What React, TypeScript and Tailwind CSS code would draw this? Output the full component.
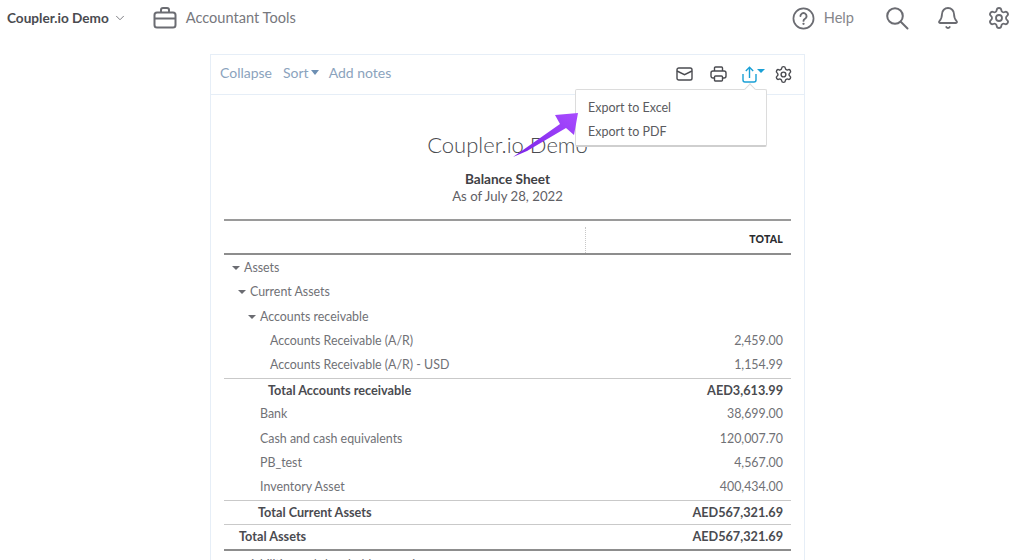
import React from "react";
import { ChevronDown, Settings, Bell } from "lucide-react";

const font = "[font-family:Lato,'Liberation_Sans',sans-serif]";

function Caret({ className }: { className: string }) {
  return <span className={`inline-block w-0 h-0 border-l-[4px] border-r-[4px] border-t-[4px] border-l-transparent border-r-transparent ${className}`} />;
}

type RowProps = {
  label: string;
  value?: string;
  indent: string;
  bold?: boolean;
  caret?: boolean;
  line?: boolean;
};

const rows: RowProps[] = [
  { label: "Assets", indent: "pl-[20px]", caret: true },
  { label: "Current Assets", indent: "pl-[26px]", caret: true },
  { label: "Accounts receivable", indent: "pl-[36px]", caret: true },
  { label: "Accounts Receivable (A/R)", value: "2,459.00", indent: "pl-[46px]" },
  { label: "Accounts Receivable (A/R) - USD", value: "1,154.99", indent: "pl-[46px]" },
  { label: "Total Accounts receivable", value: "AED3,613.99", indent: "pl-[44px]", bold: true, line: true },
  { label: "Bank", value: "38,699.00", indent: "pl-[36px]" },
  { label: "Cash and cash equivalents", value: "120,007.70", indent: "pl-[36px]" },
  { label: "PB_test", value: "4,567.00", indent: "pl-[36px]" },
  { label: "Inventory Asset", value: "400,434.00", indent: "pl-[36px]" },
  { label: "Total Current Assets", value: "AED567,321.69", indent: "pl-[34px]", bold: true, line: true },
  { label: "Total Assets", value: "AED567,321.69", indent: "pl-[15px]", bold: true, line: true },
];

function Row({ label, value, indent, bold, caret, line }: RowProps) {
  return (
    <div className={`flex items-center justify-between h-[24.4px] pr-[8px] ${indent} ${line ? "border-t border-[#c9c9c9]" : ""} ${bold ? "text-[12.7px] font-bold text-[#4a4b50]" : "text-[12.4px] text-[#707176]"}`}>
      <span className="relative">
        {caret && <Caret className="absolute left-[-12px] top-[7px] border-t-[#6b6c72]" />}
        {label}
      </span>
      {value && <span>{value}</span>}
    </div>
  );
}

export default function App() {
  return (
    <div className={`relative h-[560px] w-[1024px] overflow-hidden bg-white ${font}`}>
      <header className="flex items-center justify-between h-[36px] pl-[7px] pr-[13px]">
        <div className="flex items-center">
          <span className="text-[13.6px] font-bold text-[#4a4b50]">Coupler.io Demo</span>
          <ChevronDown size={14} strokeWidth={1.5} className="ml-[4px] text-[#6b6c72]" />
          <svg width="24" height="24" viewBox="0 0 24 24" fill="none" stroke="#6b6c72" strokeWidth="2" className="ml-[26px]">
            <rect x="1.5" y="6.5" width="21" height="15" rx="2.5" />
            <path d="M8 6.5V4a2 2 0 0 1 2-2h4a2 2 0 0 1 2 2v2.5M1.5 12.5h21" />
          </svg>
          <span className="ml-[9px] text-[14.6px] text-[#77787d]">Accountant Tools</span>
        </div>
        <div className="flex items-center">
          <svg width="23" height="23" viewBox="0 0 24 24" fill="none" stroke="#6b6c72" strokeWidth="1.8">
            <circle cx="12" cy="12" r="10.5" />
            <path d="M8.8 9.5a3.2 3.2 0 1 1 4.8 2.8c-1 .6-1.6 1.1-1.6 2.2" strokeLinecap="round" strokeWidth="2" />
            <circle cx="12" cy="17.6" r="1.2" fill="#6b6c72" stroke="none" />
          </svg>
          <span className="ml-[9px] text-[14.6px] text-[#85868b]">Help</span>
          <svg width="24" height="24" viewBox="0 0 24 24" fill="none" stroke="#6b6c72" strokeWidth="2" strokeLinecap="round" className="ml-[31px]">
            <circle cx="10" cy="10" r="7.8" />
            <path d="M16 16l6.5 6.5" />
          </svg>
          <Bell size={24} strokeWidth={1.8} className="ml-[27px] text-[#6b6c72]" />
          <Settings size={24} strokeWidth={1.8} className="ml-[27px] text-[#6b6c72]" />
        </div>
      </header>

      <main className="ml-[210px] mt-[18px] w-[595px] border border-[#e6eef7] border-b-0 h-[520px]">
        <div className="flex items-center h-[40px] pl-[9px] pr-[11px] pb-[4px] border-b border-[#e6eef7] text-[14px] text-[#8ba3bd]">
          <span>Collapse</span>
          <span className="ml-[11px]">Sort</span>
          <Caret className="ml-[2px] border-t-[#6d8fb3] border-l-[4.5px] border-r-[4.5px] border-t-[5px]" />
          <span className="ml-[10px]">Add notes</span>
          <div className="ml-auto mt-[3px] flex items-center gap-[15px]">
            <svg width="17" height="14" viewBox="0 0 17 14" fill="none" stroke="#4a4b50" strokeWidth="1.4" className="mr-[2px]">
              <rect x="1" y="1" width="15" height="12" rx="1.8" />
              <path d="M1 4l7.5 3.6L16 4" />
            </svg>
            <svg width="17" height="16" viewBox="0 0 17 16" fill="none" stroke="#4a4b50" strokeWidth="1.4">
              <path d="M4.5 5V2a1 1 0 0 1 1-1h6a1 1 0 0 1 1 1v3" />
              <rect x="1" y="5" width="15" height="7" rx="2" />
              <rect x="4.5" y="10" width="8" height="5" rx="1" fill="white" />
            </svg>
            <span className="flex items-center">
              <svg width="15" height="17" viewBox="0 0 15 17" fill="none" stroke="#1aa0d6" strokeWidth="1.4">
                <path d="M1 8v6a2 2 0 0 0 2 2h9a2 2 0 0 0 2-2V8" />
                <path d="M7.5 12V1.5M3.8 5l3.7-3.7L11.2 5" />
              </svg>
              <Caret className="ml-[0px] mb-[7px] border-t-[#1aa0d6]" />
            </span>
          </div>
          <Settings size={19} strokeWidth={1.8} className="ml-[9px] mt-[3px] text-[#4a4b50]" />
        </div>

        <div className="px-[13px] pt-[35px]">
          <div className="text-center text-[22px] leading-[30px] font-light text-[#4a4b50]">Coupler.io Demo</div>
          <div className="mt-[10px] text-center text-[13.6px] leading-[18px] font-bold text-[#3f4145]">Balance Sheet</div>
          <div className="text-center text-[13.2px] leading-[17px] text-[#5f6065]">As of July 28, 2022</div>

          <div className="mt-[14px] h-[36px] border-t-2 border-b-2 border-t-[#9a9a9a] border-b-[#8d8d8d] flex">
            <div className="w-[362px] border-r border-dotted border-[#c8c8c8] mt-[6px]" />
            <div className="flex-1 flex items-center justify-end pt-[5px] pr-[8px] text-[10.5px] font-black text-[#2b2c30] tracking-[0.2px]">TOTAL</div>
          </div>
          <div className="pt-[1px]">
            {rows.map((r) => <Row key={r.label} {...r} />)}
          </div>
          <div className="h-[2px] bg-[#8d8d8d]" />
          <div className="pl-[21px] pt-[6px] text-[12px] leading-[14px] text-[#6b6c72]">Liabilities and shareholder's equity</div>
        </div>
      </main>

      <div className="absolute left-[575px] top-[89px] w-[192px] h-[58px] bg-white border border-[#dcdcdc] border-b-2 border-b-[#cfcfcf] rounded-[2px] pl-[12px] pt-[6px] text-[12.5px] text-[#5a5b60] leading-[24px]">
        <span className="absolute left-[170px] top-[-5px] w-[8px] h-[8px] rotate-45 bg-white border-l border-t border-[#dcdcdc]" />
        <div>Export to Excel</div>
        <div>Export to PDF</div>
      </div>

      <svg className="absolute left-[510px] top-[110px]" width="72" height="50" viewBox="0 0 72 50">
        <defs>
          <linearGradient id="arrowGrad" x1="0" y1="1" x2="1" y2="0">
            <stop offset="0" stopColor="#7a22e8" />
            <stop offset="1" stopColor="#a94cff" />
          </linearGradient>
        </defs>
        <path d="M3 47L50 14 45 5 68 3 64 25 56 18 17 41 3 47Z" fill="url(#arrowGrad)" />
      </svg>
    </div>
  );
}
